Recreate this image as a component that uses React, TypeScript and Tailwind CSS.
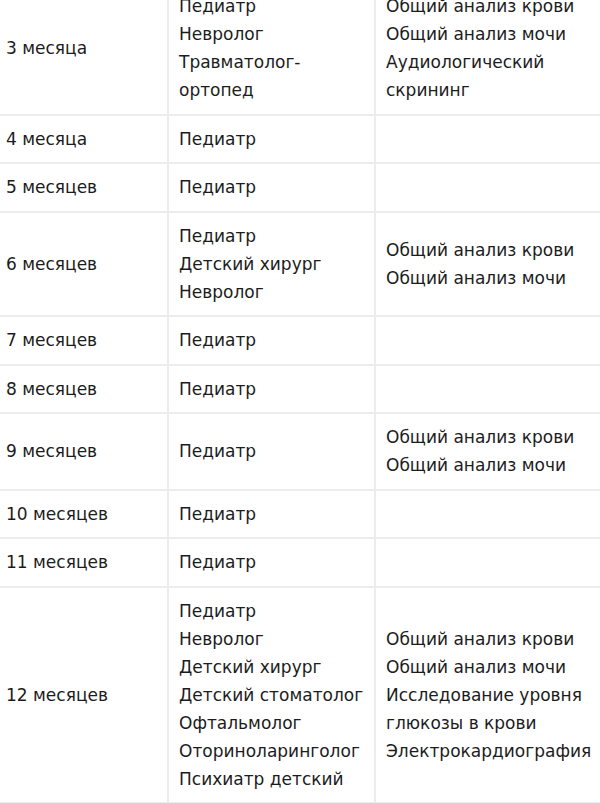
import React from "react";

type Row = { age: string; doctors: string[]; tests: string[] };

const rows: Row[] = [
  {
    age: "3 месяца",
    doctors: ["Педиатр", "Невролог", "Травматолог-", "ортопед"],
    tests: ["Общий анализ крови", "Общий анализ мочи", "Аудиологический", "скрининг"],
  },
  { age: "4 месяца", doctors: ["Педиатр"], tests: [] },
  { age: "5 месяцев", doctors: ["Педиатр"], tests: [] },
  {
    age: "6 месяцев",
    doctors: ["Педиатр", "Детский хирург", "Невролог"],
    tests: ["Общий анализ крови", "Общий анализ мочи"],
  },
  { age: "7 месяцев", doctors: ["Педиатр"], tests: [] },
  { age: "8 месяцев", doctors: ["Педиатр"], tests: [] },
  {
    age: "9 месяцев",
    doctors: ["Педиатр"],
    tests: ["Общий анализ крови", "Общий анализ мочи"],
  },
  { age: "10 месяцев", doctors: ["Педиатр"], tests: [] },
  { age: "11 месяцев", doctors: ["Педиатр"], tests: [] },
  {
    age: "12 месяцев",
    doctors: [
      "Педиатр",
      "Невролог",
      "Детский хирург",
      "Детский стоматолог",
      "Офтальмолог",
      "Оториноларинголог",
      "Психиатр детский",
    ],
    tests: [
      "Общий анализ крови",
      "Общий анализ мочи",
      "Исследование уровня",
      "глюкозы в крови",
      "Электрокардиография",
    ],
  },
];

function Lines({ items }: { items: string[] }) {
  return (
    <>
      {items.map((t, i) => (
        <div key={i} className="whitespace-nowrap">
          {t}
        </div>
      ))}
    </>
  );
}

export default function App() {
  return (
    <div
      className="w-[600px] h-[803px] overflow-hidden bg-white text-[#1c1c1c] text-[17px] leading-[28px]"
      style={{ fontFamily: "'DejaVu Sans', sans-serif" }}
    >
      <div className="-mt-[17px]">
        {rows.map((r) => (
          <div
            key={r.age}
            className="grid grid-cols-[169px_207px_224px] border-b-2 border-[#ececec]"
          >
            <div className="flex items-center pl-[6px] py-[9.25px] border-r-2 border-[#ececec]">
              {r.age}
            </div>
            <div className="flex flex-col justify-center pl-[10px] py-[9.25px] border-r-2 border-[#ececec]">
              <Lines items={r.doctors} />
            </div>
            <div className="flex flex-col justify-center pl-[10px] py-[9.25px]">
              <Lines items={r.tests} />
            </div>
          </div>
        ))}
      </div>
    </div>
  );
}
